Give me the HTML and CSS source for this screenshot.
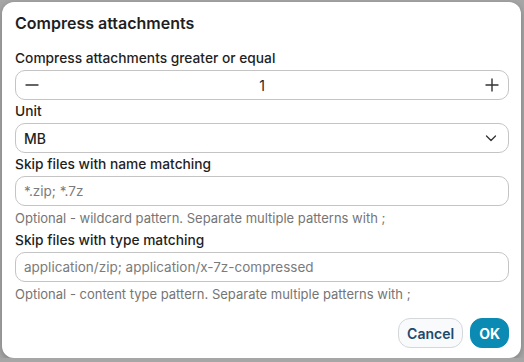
FILE: index.html
```html
<!DOCTYPE html>
<html lang="en">
<head>
    <meta charset="UTF-8">
    <meta name="viewport" content="width=device-width, initial-scale=1.0">
    <title>Compress attachments</title>
    <link rel="stylesheet" href="styles.css">
</head>
<body>
    <div class="dialog">
        <h2 class="dialog-title">Compress attachments</h2>

        <label class="field-label">Compress attachments greater or equal</label>
        <div class="stepper">
            <button class="step-btn">
                <svg width="14" height="14" viewBox="0 0 14 14"><path d="M1 7h12" stroke="#333" stroke-width="1.4" stroke-linecap="round"/></svg>
            </button>
            <input class="step-value" type="text" value="1">
            <button class="step-btn">
                <svg width="14" height="14" viewBox="0 0 14 14"><path d="M1 7h12M7 1v12" stroke="#333" stroke-width="1.4" stroke-linecap="round"/></svg>
            </button>
        </div>

        <label class="field-label">Unit</label>
        <div class="select">
            <span>MB</span>
            <svg width="12" height="12" viewBox="0 0 12 12"><path d="M1.5 4l4.5 4.5L10.5 4" fill="none" stroke="#333" stroke-width="1.3" stroke-linecap="round" stroke-linejoin="round"/></svg>
        </div>

        <label class="field-label">Skip files with name matching</label>
        <input class="text-input" type="text" placeholder="*.zip; *.7z">
        <div class="help">Optional - wildcard pattern. Separate multiple patterns with ;</div>

        <label class="field-label">Skip files with type matching</label>
        <input class="text-input" type="text" placeholder="application/zip; application/x-7z-compressed">
        <div class="help">Optional - content type pattern. Separate multiple patterns with ;</div>

        <div class="actions">
            <button class="btn btn-cancel">Cancel</button>
            <button class="btn btn-ok">OK</button>
        </div>
    </div>
</body>
</html>
```

FILE: styles.css
```css
body {
    font-family: Inter, "Noto Sans", sans-serif;
    margin: 0;
    padding: 0;
    background-color: #a6a6a6;
    color: #1f1f1f;
}
.dialog {
    box-sizing: border-box;
    width: 519px;
    height: 356px;
    margin: 2px 0 0 2px;
    padding: 10px 12px 10px 13px;
    background-color: #fff;
    border-radius: 12px;
    box-shadow: 0 2px 6px rgba(0,0,0,0.25);
    display: flex;
    flex-direction: column;
}
.dialog-title {
    margin: 0 0 13px 0;
    font-size: 16px;
    font-weight: 600;
    line-height: 22px;
}
.field-label {
    display: block;
    font-size: 13.75px;
    font-weight: 500;
    line-height: 19px;
    padding: 2px 0;
}
.stepper,
.select,
.text-input {
    box-sizing: border-box;
    height: 30px;
    width: 100%;
    border: 1px solid #c4c4c4;
    border-radius: 10px;
    background: #fff;
}
.stepper {
    display: flex;
    align-items: center;
    padding: 0 4px;
}
.step-btn {
    border: none;
    background: none;
    padding: 0;
    width: 24px;
    height: 24px;
    display: flex;
    align-items: center;
    justify-content: center;
}
.step-value {
    flex: 1;
    border: none;
    outline: none;
    text-align: center;
    font-family: inherit;
    font-size: 14px;
    color: #1f1f1f;
    background: none;
}
.select {
    display: flex;
    align-items: center;
    justify-content: space-between;
    padding: 0 11px 0 8px;
    font-size: 14px;
    font-weight: 500;
}
.text-input {
    padding: 0 8px;
    font-family: inherit;
    font-size: 13.5px;
    outline: none;
}
.text-input::placeholder {
    color: #7b7b7b;
}
.help {
    font-size: 13px;
    color: #757575;
    line-height: 19px;
    padding: 3px 0 1px 0;
}
.actions {
    margin-top: auto;
    display: flex;
    justify-content: flex-end;
    gap: 7px;
}
.btn {
    height: 30px;
    border-radius: 12px;
    font-family: inherit;
    font-size: 14px;
    font-weight: 600;
    padding: 0 8px;
    cursor: pointer;
}
.btn-cancel {
    background-color: #f8fafb;
    border: 1px solid #d4d8db;
    color: #1d4a6b;
}
.btn-ok {
    background-color: #0b8ab3;
    border: 1px solid #0b8ab3;
    color: #fff;
    font-weight: 700;
}
```
